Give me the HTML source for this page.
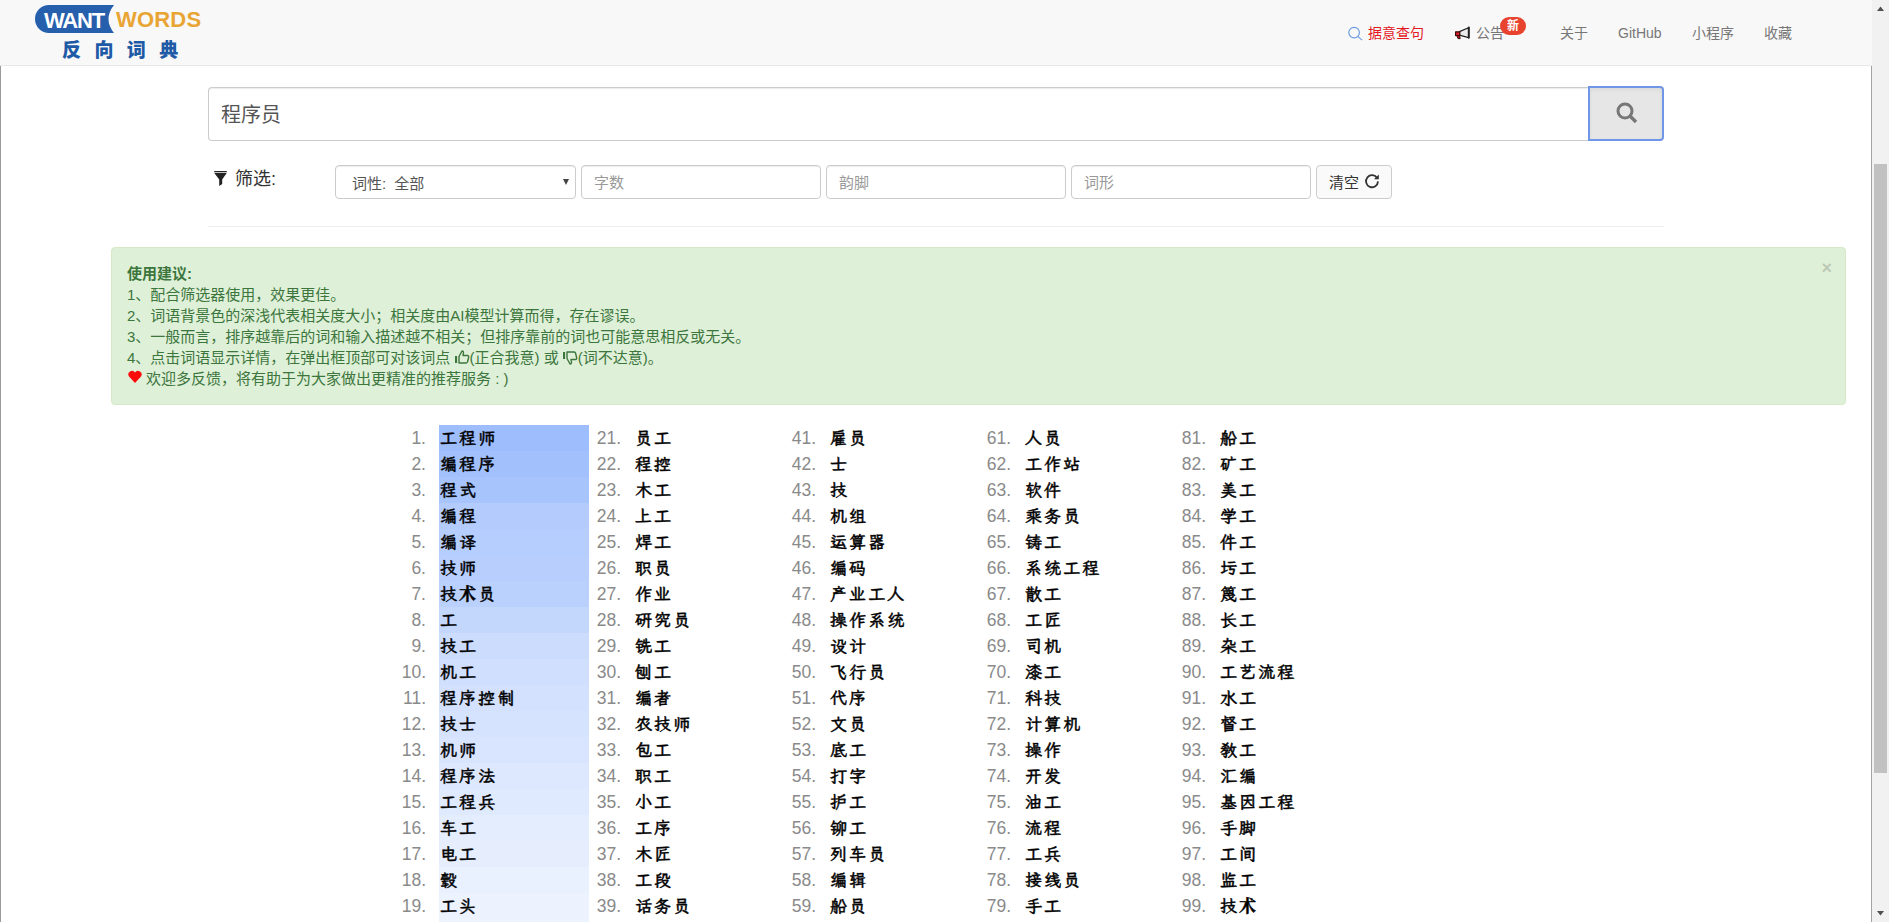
<!DOCTYPE html>
<html lang="zh-CN">
<head>
<meta charset="utf-8">
<title>WantWords 反向词典</title>
<style>
*{box-sizing:border-box;margin:0;padding:0}
html,body{width:1889px;height:922px;overflow:hidden;background:#fff}
body{font-family:"Liberation Sans","Noto Sans CJK SC",sans-serif;font-size:15px;line-height:21px;color:#333;position:relative}
#page{position:absolute;left:0;top:0;width:1889px;height:922px;overflow:hidden;background:#fff}
/* side lines */
#lline{position:absolute;left:0;top:66px;width:1px;height:856px;background:#9b9b9b}
#rline{position:absolute;left:1871px;top:66px;width:1px;height:856px;background:#a3a3a3}
/* navbar */
#nav{position:absolute;left:0;top:0;width:1872px;height:66px;background:#f8f8f8;border-bottom:1px solid #e7e7e7}
#logo{position:absolute;left:35px;top:5px;width:170px;height:56px}
#pill{position:absolute;left:0;top:0;width:79px;height:28px}
#want{position:absolute;left:9px;top:2.5px;font-weight:bold;font-size:22px;line-height:26px;color:#fff;letter-spacing:-1.2px;white-space:nowrap}
#wordsl{position:absolute;left:81px;top:2px;font-weight:bold;font-size:22px;line-height:26px;color:#e9a534;white-space:nowrap;letter-spacing:.2px}
#cn{position:absolute;left:27px;top:34px;font-weight:900;font-size:19px;line-height:24px;color:#1f5aa6;letter-spacing:13.4px;white-space:nowrap;font-family:"Liberation Sans","Noto Sans CJK SC",sans-serif}
.nv{position:absolute;top:22px;font-size:14px;line-height:22px;color:#777;white-space:nowrap}
#n1{left:1368px;color:#e4181f}
#n2{left:1476px}
#n3{left:1560px}
#n4{left:1618px}
#n5{left:1692px}
#n6{left:1764px}
#badge{position:absolute;left:1500px;top:17px;width:26px;height:18px;border-radius:9px;background:#e8432e;color:#fff;font-size:12px;font-weight:bold;line-height:18px;text-align:center}
#mag1{position:absolute;left:1347px;top:26px;width:16px;height:15px}
#mega{position:absolute;left:1454px;top:26px;width:18px;height:14px}
/* search */
#q{position:absolute;left:208px;top:87px;width:1381px;height:54px;border:1px solid #ccc;border-right:0;border-radius:4px 0 0 4px;background:#fff;box-shadow:inset 0 1px 1px rgba(0,0,0,.075);font-size:20px;line-height:55px;padding-left:12px;color:#555}
#sb{position:absolute;left:1588px;top:86px;width:76px;height:55px;border:2px solid #7096e7;border-radius:0 4px 4px 0;background:#e6e6e6;box-shadow:inset 0 2px 4px rgba(0,0,0,.05)}
#sb svg{position:absolute;left:26px;top:13.5px;width:22px;height:22px}
/* filter */
#fl{position:absolute;left:235px;top:166px;font-size:18px;line-height:26px;color:#333;white-space:nowrap}
#funnel{position:absolute;left:214px;top:170.5px;width:13px;height:15px}
.fc{position:absolute;top:165px;height:34px;border:1px solid #ccc;border-radius:4px;background:#fff;box-shadow:inset 0 1px 1px rgba(0,0,0,.075);font-size:15px;line-height:34px;padding-left:12px;color:#999;white-space:nowrap}
#sel{left:335px;width:241px;color:#555;padding-left:16px;line-height:35px;word-spacing:4px}
#sel i{position:absolute;right:6px;top:13px;width:0;height:0;border-left:3.5px solid transparent;border-right:3.5px solid transparent;border-top:6px solid #444}
#f1{left:581px;width:240px}
#f2{left:826px;width:240px}
#f3{left:1071px;width:240px}
#clr{left:1316px;width:76px;color:#333;background:#fafafa;box-shadow:none;padding-left:12px}
#clr svg{position:absolute;left:47px;top:7px;width:16px;height:16px}
#hr{position:absolute;left:208px;top:226px;width:1456px;height:1px;background:#eee}
/* alert */
#al{position:absolute;left:111px;top:247px;width:1735px;height:158px;border:1px solid #d6e9c6;border-radius:4px;background:#dff0d8;color:#3c763d;padding:15px 15px;font-size:15px;line-height:21px;white-space:nowrap}
#al b{font-weight:bold}
#al .x{position:absolute;left:1709.5px;top:11px;font-size:18px;line-height:18px;font-weight:bold;color:#000;opacity:.16;text-shadow:0 1px 0 #fff}
#al svg.ic{display:inline-block;vertical-align:-0.5px;width:15px;height:14px}#al svg.dn{vertical-align:-1.5px}
#al svg.ht{display:inline-block;vertical-align:1.5px;width:14px;height:13px;margin-right:4px;margin-left:1px}
/* list */
ol.col{position:absolute;top:425px;list-style:none;width:195px}
ol.c1{left:394px}ol.c2{left:589px}ol.c3{left:784px}ol.c4{left:979px}ol.c5{left:1174px}
ol.col li{position:relative;height:26px;line-height:27px;white-space:nowrap}
.n{position:absolute;left:0;top:0;width:32px;text-align:right;font-size:17.5px;line-height:26px;color:#8a8a8a;font-family:"Liberation Sans",sans-serif}
.w{position:absolute;left:45px;top:0;width:150px;height:26px;font-family:"Liberation Serif","LXGW WenKai TC","Noto Serif CJK SC",serif;font-weight:bold;font-size:17px;letter-spacing:2.1px;color:#000;padding-left:1px;-webkit-text-stroke:0.4px #000}
.sc{font-family:"Noto Serif CJK SC",serif;line-height:0}
/* scrollbar */
#sbar{position:absolute;left:1872px;top:0;width:17px;height:922px;background:#f1f1f1}
#thumb{position:absolute;left:2px;top:164px;width:13px;height:609px;background:#c1c1c1}
#sbar svg{position:absolute;left:0;width:17px;height:17px}
</style>
</head>
<body>
<div id="page">
<div id="nav">
  <div id="logo">
    <svg id="pill" viewBox="0 0 79 28"><path d="M14 0 H79 Q68 14 79 28 H14 A14 14 0 0 1 14 0 Z" fill="#2660ad"/></svg>
    <span id="want">WANT</span><span id="wordsl">WORDS</span>
    <span id="cn">反向词典</span>
  </div>
  <svg id="mag1" viewBox="0 0 18 17"><circle cx="8" cy="7.5" r="6" fill="none" stroke="#6a9ae2" stroke-width="1.3"/><path d="M12.5 12 L17 16" stroke="#6a9ae2" stroke-width="1.3" fill="none"/></svg>
  <span class="nv" id="n1">据意查句</span>
  <svg id="mega" viewBox="0 0 18 14"><path d="M5.5 5.6 L14.6 1.8 V11.6 L5.5 9.2 Z" fill="#ececec" stroke="#222" stroke-width="1.2" stroke-linejoin="round"/><path d="M14.8 1.6 V11.8" stroke="#222" stroke-width="2" stroke-linecap="round"/><path d="M1.6 5.8 H5.8 V9.6 H1.6 Z" fill="#e0202a" stroke="#3a0a0a" stroke-width="1.2" stroke-linejoin="round"/><path d="M3 9.6 L4 12.6 H6.2 L5.6 9.6 Z" fill="#c8151f" stroke="#3a0a0a" stroke-width="1" stroke-linejoin="round"/></svg>
  <span class="nv" id="n2">公告</span>
  <span id="badge">新</span>
  <span class="nv" id="n3">关于</span>
  <span class="nv" id="n4">GitHub</span>
  <span class="nv" id="n5">小程序</span>
  <span class="nv" id="n6">收藏</span>
</div>
<div id="lline"></div><div id="rline"></div>
<div id="q">程序员</div>
<div id="sb"><svg viewBox="0 0 22 22"><circle cx="9" cy="9" r="7" fill="none" stroke="#777" stroke-width="3"/><path d="M14 14 L20 20" stroke="#777" stroke-width="3.4" stroke-linecap="butt"/></svg></div>
<svg id="funnel" viewBox="0 0 13 15"><path d="M0.2 0 H12.8 V1.2 H0.2 Z M0.3 2 H12.7 L8.2 8.6 V13 L5.2 15 V8.6 Z" fill="#222"/></svg>
<div id="fl">筛选:</div>
<div class="fc" id="sel">词性: 全部<i></i></div>
<div class="fc" id="f1">字数</div>
<div class="fc" id="f2">韵脚</div>
<div class="fc" id="f3">词形</div>
<div class="fc" id="clr">清空<svg viewBox="0 0 16 16"><path d="M13.2 5.2 A6 6 0 1 0 14 8.4" fill="none" stroke="#333" stroke-width="1.8"/><path d="M10 6.3 H14.8 V1.5 Z" fill="#333"/></svg></div>
<div id="hr"></div>
<div id="al">
<span class="x">×</span>
<b>使用建议:</b><br>
1、配合筛选器使用，效果更佳。<br>
2、词语背景色的深浅代表相关度大小；相关度由AI模型计算而得，存在谬误。<br>
3、一般而言，排序越靠后的词和输入描述越不相关；但排序靠前的词也可能意思相反或无关。<br>
4、点击词语显示详情，在弹出框顶部可对该词点 <svg class="ic" viewBox="0 0 15 14"><path d="M1 6 V13" stroke="#3c763d" stroke-width="2.2" fill="none"/><path d="M4 6.5 L7 1 Q9 1 8.3 4 L8 5.5 H12.5 Q14 5.5 13.6 7.5 L12.5 12 Q12 13 11 13 H4 Z" fill="none" stroke="#3c763d" stroke-width="1.4" stroke-linejoin="round"/></svg>(正合我意) 或 <svg class="ic dn" viewBox="0 0 15 14"><path d="M1 1 V8" stroke="#3c763d" stroke-width="2.2" fill="none"/><path d="M4 7.5 L7 13 Q9 13 8.3 10 L8 8.5 H12.5 Q14 8.5 13.6 6.5 L12.5 2 Q12 1 11 1 H4 Z" fill="none" stroke="#3c763d" stroke-width="1.4" stroke-linejoin="round"/></svg>(词不达意)。<br>
<svg class="ht" viewBox="0 0 14 13"><path d="M7 13 L1 6.5 A3.4 3.4 0 0 1 7 2.6 A3.4 3.4 0 0 1 13 6.5 Z" fill="#fb0a0a"/></svg>欢迎多反馈，将有助于为大家做出更精准的推荐服务 : )
</div>
<ol class="col c1" start="1">
<li><span class="n">1.</span><span class="w" style="background:rgb(157,189,252)">工程师</span></li>
<li><span class="n">2.</span><span class="w" style="background:rgb(161,192,252)">编程序</span></li>
<li><span class="n">3.</span><span class="w" style="background:rgb(167,196,252)">程式</span></li>
<li><span class="n">4.</span><span class="w" style="background:rgb(179,204,253)">编程</span></li>
<li><span class="n">5.</span><span class="w" style="background:rgb(182,206,253)">编译</span></li>
<li><span class="n">6.</span><span class="w" style="background:rgb(184,207,253)">技师</span></li>
<li><span class="n">7.</span><span class="w" style="background:rgb(186,209,253)">技<span class="sc">术</span>员</span></li>
<li><span class="n">8.</span><span class="w" style="background:rgb(195,215,253)">工</span></li>
<li><span class="n">9.</span><span class="w" style="background:rgb(203,220,253)">技工</span></li>
<li><span class="n">10.</span><span class="w" style="background:rgb(208,223,254)">机工</span></li>
<li><span class="n">11.</span><span class="w" style="background:rgb(211,225,254)">程序控制</span></li>
<li><span class="n">12.</span><span class="w" style="background:rgb(214,227,254)">技士</span></li>
<li><span class="n">13.</span><span class="w" style="background:rgb(217,229,254)">机师</span></li>
<li><span class="n">14.</span><span class="w" style="background:rgb(221,232,254)">程序法</span></li>
<li><span class="n">15.</span><span class="w" style="background:rgb(224,234,254)">工程兵</span></li>
<li><span class="n">16.</span><span class="w" style="background:rgb(228,237,254)">车工</span></li>
<li><span class="n">17.</span><span class="w" style="background:rgb(230,238,254)">电工</span></li>
<li><span class="n">18.</span><span class="w" style="background:rgb(233,240,254)">毂</span></li>
<li><span class="n">19.</span><span class="w" style="background:rgb(236,242,254)">工头</span></li>
</ol>
<ol class="col c2" start="21">
<li><span class="n">21.</span><span class="w">员工</span></li>
<li><span class="n">22.</span><span class="w">程控</span></li>
<li><span class="n">23.</span><span class="w">木工</span></li>
<li><span class="n">24.</span><span class="w">上工</span></li>
<li><span class="n">25.</span><span class="w">焊工</span></li>
<li><span class="n">26.</span><span class="w">职员</span></li>
<li><span class="n">27.</span><span class="w">作业</span></li>
<li><span class="n">28.</span><span class="w">研究员</span></li>
<li><span class="n">29.</span><span class="w">铣工</span></li>
<li><span class="n">30.</span><span class="w">刨工</span></li>
<li><span class="n">31.</span><span class="w">编者</span></li>
<li><span class="n">32.</span><span class="w">农技师</span></li>
<li><span class="n">33.</span><span class="w">包工</span></li>
<li><span class="n">34.</span><span class="w">职工</span></li>
<li><span class="n">35.</span><span class="w">小工</span></li>
<li><span class="n">36.</span><span class="w">工序</span></li>
<li><span class="n">37.</span><span class="w">木匠</span></li>
<li><span class="n">38.</span><span class="w">工段</span></li>
<li><span class="n">39.</span><span class="w">话务员</span></li>
</ol>
<ol class="col c3" start="41">
<li><span class="n">41.</span><span class="w">雇员</span></li>
<li><span class="n">42.</span><span class="w">士</span></li>
<li><span class="n">43.</span><span class="w">技</span></li>
<li><span class="n">44.</span><span class="w">机组</span></li>
<li><span class="n">45.</span><span class="w">运算器</span></li>
<li><span class="n">46.</span><span class="w">编码</span></li>
<li><span class="n">47.</span><span class="w">产业工人</span></li>
<li><span class="n">48.</span><span class="w">操作系统</span></li>
<li><span class="n">49.</span><span class="w">设计</span></li>
<li><span class="n">50.</span><span class="w">飞行员</span></li>
<li><span class="n">51.</span><span class="w">代序</span></li>
<li><span class="n">52.</span><span class="w">文员</span></li>
<li><span class="n">53.</span><span class="w">底工</span></li>
<li><span class="n">54.</span><span class="w">打字</span></li>
<li><span class="n">55.</span><span class="w">护工</span></li>
<li><span class="n">56.</span><span class="w">铆工</span></li>
<li><span class="n">57.</span><span class="w">列车员</span></li>
<li><span class="n">58.</span><span class="w">编辑</span></li>
<li><span class="n">59.</span><span class="w">船员</span></li>
</ol>
<ol class="col c4" start="61">
<li><span class="n">61.</span><span class="w">人员</span></li>
<li><span class="n">62.</span><span class="w">工作站</span></li>
<li><span class="n">63.</span><span class="w">软件</span></li>
<li><span class="n">64.</span><span class="w">乘务员</span></li>
<li><span class="n">65.</span><span class="w">铸工</span></li>
<li><span class="n">66.</span><span class="w">系统工程</span></li>
<li><span class="n">67.</span><span class="w">散工</span></li>
<li><span class="n">68.</span><span class="w">工匠</span></li>
<li><span class="n">69.</span><span class="w">司机</span></li>
<li><span class="n">70.</span><span class="w">漆工</span></li>
<li><span class="n">71.</span><span class="w">科技</span></li>
<li><span class="n">72.</span><span class="w">计算机</span></li>
<li><span class="n">73.</span><span class="w">操作</span></li>
<li><span class="n">74.</span><span class="w">开发</span></li>
<li><span class="n">75.</span><span class="w">油工</span></li>
<li><span class="n">76.</span><span class="w">流程</span></li>
<li><span class="n">77.</span><span class="w">工兵</span></li>
<li><span class="n">78.</span><span class="w">接线员</span></li>
<li><span class="n">79.</span><span class="w">手工</span></li>
</ol>
<ol class="col c5" start="81">
<li><span class="n">81.</span><span class="w">船工</span></li>
<li><span class="n">82.</span><span class="w">矿工</span></li>
<li><span class="n">83.</span><span class="w">美工</span></li>
<li><span class="n">84.</span><span class="w">学工</span></li>
<li><span class="n">85.</span><span class="w">件工</span></li>
<li><span class="n">86.</span><span class="w">圬工</span></li>
<li><span class="n">87.</span><span class="w">篾工</span></li>
<li><span class="n">88.</span><span class="w">长工</span></li>
<li><span class="n">89.</span><span class="w">杂工</span></li>
<li><span class="n">90.</span><span class="w">工艺流程</span></li>
<li><span class="n">91.</span><span class="w">水工</span></li>
<li><span class="n">92.</span><span class="w">督工</span></li>
<li><span class="n">93.</span><span class="w">教工</span></li>
<li><span class="n">94.</span><span class="w">汇编</span></li>
<li><span class="n">95.</span><span class="w">基因工程</span></li>
<li><span class="n">96.</span><span class="w">手脚</span></li>
<li><span class="n">97.</span><span class="w">工间</span></li>
<li><span class="n">98.</span><span class="w">监工</span></li>
<li><span class="n">99.</span><span class="w">技<span class="sc">术</span></span></li>
</ol><div id="row20" style="position:absolute;left:439px;top:919px;width:150px;height:3px;background:rgb(238,244,254)"></div>
<div id="sbar">
  <svg style="top:0" viewBox="0 0 17 17"><path d="M5 11 H12 L8.5 6.5 Z" fill="#505050"/></svg>
  <div id="thumb"></div>
  <svg style="top:905px" viewBox="0 0 17 17"><path d="M5 6 H12 L8.5 10.5 Z" fill="#505050"/></svg>
</div>
</div>
</body>
</html>
